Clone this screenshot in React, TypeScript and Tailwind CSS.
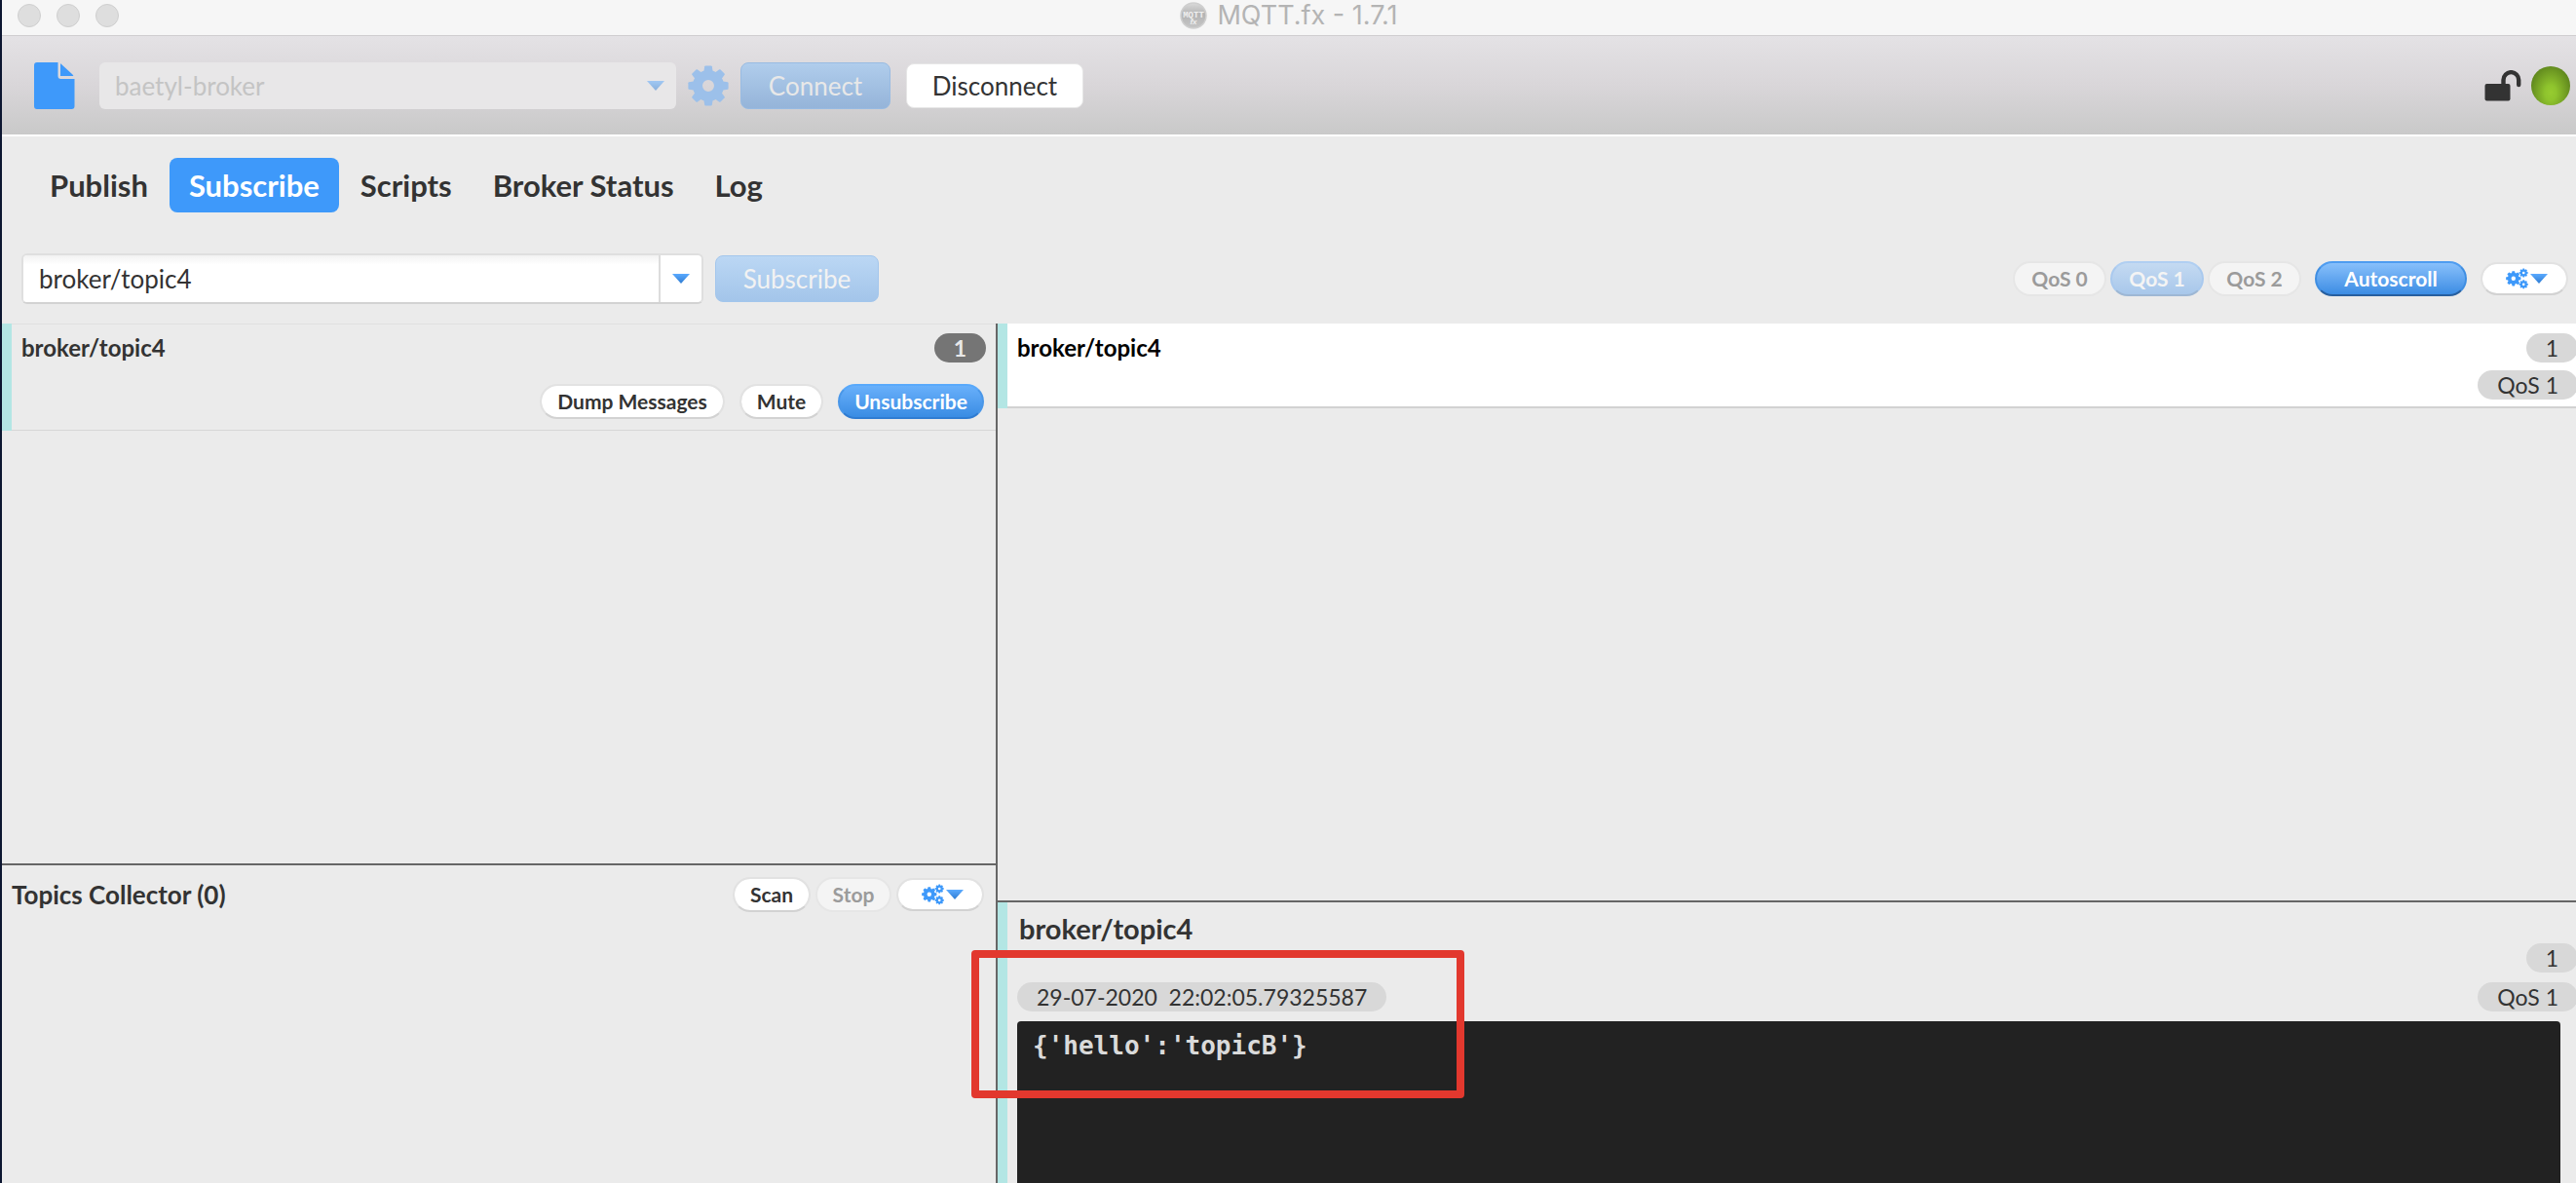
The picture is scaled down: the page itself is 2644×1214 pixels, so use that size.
import type { ButtonHTMLAttributes, ReactNode } from "react";

const TURNS = [0, 45, 90, 135, 180, 225, 270, 315];

function GearShape() {
  return (
    <g fill="currentColor">
      <circle cx="21" cy="21" r="11" fill="none" stroke="currentColor" strokeWidth="10" />
      {TURNS.map((a) => (
        <path key={a} transform={`rotate(${a} 21 21)`} d="M16 9 L17.2 1.2 Q17.4 0.4 18.2 0.4 H23.8 Q24.6 0.4 24.8 1.2 L26 9 Z" />
      ))}
    </g>
  );
}

function Gear() {
  return (
    <svg viewBox="0 0 42 42" className="size-[42px]" aria-hidden="true">
      <GearShape />
    </svg>
  );
}

function Gears() {
  return (
    <svg viewBox="0 0 23 22" className="h-[22px] w-[23px] text-[#3e99fa]" aria-hidden="true">
      <g transform="translate(0 3) scale(0.37)">
        <GearShape />
      </g>
      <g transform="translate(13.6 0.4) scale(0.22)">
        <GearShape />
      </g>
      <g transform="translate(13.6 12.2) scale(0.22)">
        <GearShape />
      </g>
    </svg>
  );
}

function Arrow() {
  return (
    <svg viewBox="0 0 18 10" className="h-2.5 w-[18px]" aria-hidden="true">
      <defs>
        <linearGradient id="arrow" x1="0" y1="0" x2="0" y2="1">
          <stop offset="0" stopColor="#5aaaff" />
          <stop offset="1" stopColor="#2f7cd2" />
        </linearGradient>
      </defs>
      <path d="M0 0H18L9 10Z" fill="url(#arrow)" />
    </svg>
  );
}

function FileIcon() {
  return (
    <svg viewBox="0 0 42 48" className="h-12 w-[42px]" fill="#3e99fa">
      <path d="M3 0H24.5V14Q24.5 17 27.5 17H41.5V45Q41.5 48 38.5 48H3Q0 48 0 45V3Q0 0 3 0Z" />
      <path d="M27 1.2Q28 1.6 28.6 2.4L39 12Q40 13 40.4 14H27Z" />
    </svg>
  );
}

function UnlockIcon() {
  return (
    <svg viewBox="0 0 38 32" className="h-8 w-[38px]" role="img" aria-label="Unencrypted">
      <rect x="0.5" y="14" width="26" height="17.5" rx="2" fill="#333" />
      <path d="M19.5 15V10A7.8 7.8 0 0 1 35.2 10V15" fill="none" stroke="#333" strokeWidth="4.4" strokeLinecap="round" />
    </svg>
  );
}

function AppLogo() {
  return (
    <svg viewBox="0 0 28 28" className="size-7" aria-hidden="true">
      <defs>
        <linearGradient id="logo" x1="0" y1="0" x2="0" y2="1">
          <stop offset="0" stopColor="#dadada" />
          <stop offset="0.45" stopColor="#b4b4b4" />
          <stop offset="1" stopColor="#c6c6c6" />
        </linearGradient>
      </defs>
      <circle cx="14" cy="14" r="13" fill="url(#logo)" stroke="#cfcfcf" strokeWidth="1.5" />
      <text x="14" y="15.5" textAnchor="middle" fontSize="9" fontWeight="700" fill="#efefef" fontFamily="Liberation Mono, monospace">MQTT</text>
      <text x="14" y="23" textAnchor="middle" fontSize="8" fontWeight="700" fontStyle="italic" fill="#efefef" fontFamily="Liberation Sans, sans-serif">fx</text>
    </svg>
  );
}

const PILL = "flex h-9 items-center justify-center rounded-full border-2 text-[21px] leading-6 font-bold whitespace-nowrap";
const WHITE = "border-[#e2e2e2] border-b-[#d2d2d2] bg-white bg-clip-padding text-[#333]";
const FADED = "border-[#e6e6e6] bg-[#f4f4f4] text-[#9b9b9b]";
const BLUE = "border-t-[#59a9fb] border-x-[#4a97e8] border-b-[#2f7cd2] bg-linear-to-b from-[#6bb2fc] to-[#368ae2] bg-origin-border text-white";

function Pill({ className, ...rest }: ButtonHTMLAttributes<HTMLButtonElement>) {
  return <button type="button" className={`${PILL} ${className}`} {...rest} />;
}

function Badge({ children, className }: { children: ReactNode; className: string }) {
  return (
    <span className={`flex h-[30px] items-center rounded-full px-5 text-[23px] leading-7 whitespace-pre ${className}`}>
      {children}
    </span>
  );
}

function MenuPill() {
  return (
    <button type="button" aria-label="Options" className={`flex h-[34px] w-[90px] items-center justify-center gap-0.5 rounded-full border-2 pl-1 ${WHITE}`}>
      <Gears />
      <Arrow />
    </button>
  );
}

const TABS = ["Publish", "Subscribe", "Scripts", "Broker Status", "Log"];

export default function App() {
  return (
    <div className="relative flex h-screen flex-col overflow-hidden border-l-2 border-[#0c1630] bg-[#ebebeb] font-['Lato',sans-serif] text-[#333]">
      <header className="grid h-[37px] shrink-0 grid-cols-3 items-center border-b border-[#cfcdcf] bg-[#f6f6f6] px-4">
        <div className="flex items-center gap-4 pb-1">
          {["Close", "Minimize", "Zoom"].map((label) => (
            <button key={label} type="button" aria-label={label} className="size-6 rounded-full border border-[#cfcfcf] bg-[#dedede]" />
          ))}
        </div>
        <h1 className="flex items-center justify-center gap-2.5 pb-1 font-['Inter',sans-serif] text-[27px] leading-8 text-[#b4b4b4]">
          <AppLogo />
          MQTT.fx - 1.7.1
        </h1>
      </header>

      <div className="flex h-[103px] shrink-0 items-center border-b-2 border-white bg-linear-to-b from-[#e4e2e5] via-[#d9d6d9] to-[#c9c9c9] pr-1.5 pl-[33px]">
        <button type="button" aria-label="New profile">
          <FileIcon />
        </button>
        <div className="relative ml-[25px] w-[592px]">
          <select disabled aria-label="Connection profile" className="h-12 w-full appearance-none rounded-md bg-[#e8e7e8] px-4 text-[26px] leading-8 text-[#c4c4c4] opacity-100">
            <option>baetyl-broker</option>
          </select>
          <span className="pointer-events-none absolute inset-y-0 right-3 flex items-center opacity-50">
            <Arrow />
          </span>
        </div>
        <button type="button" aria-label="Edit profiles" className="ml-3 text-[#9cc0ea]">
          <Gear />
        </button>
        <button type="button" disabled className="ml-3 h-12 w-[154px] rounded-lg border border-[#98bbe2] bg-linear-to-b from-[#b0cdec] to-[#95b4d9] text-[26px] leading-8 text-[#e8e8e8]">
          Connect
        </button>
        <button type="button" className="ml-4 h-[46px] w-[182px] rounded-lg border border-[#e6e6e6] bg-white text-[26px] leading-8">
          Disconnect
        </button>
        <div className="ml-auto flex items-center gap-2.5">
          <UnlockIcon />
          <span role="img" aria-label="Connected" className="size-10 rounded-full bg-[radial-gradient(ellipse_at_50%_68%,#96cb30_0%,#8fc42d_20%,#76a325_50%,#5b821c_80%)]" />
        </div>
      </div>

      <nav className="flex shrink-0 items-center gap-0.5 pt-[22px] pl-[29px]">
        {TABS.map((tab) => (
          <button
            key={tab}
            type="button"
            className={`h-14 rounded-lg px-5 text-[31px] leading-10 font-bold ${tab === "Subscribe" ? "bg-[#3e99fa] text-white" : ""}`}
          >
            {tab}
          </button>
        ))}
      </nav>

      <div className="flex h-[114px] shrink-0 items-center pt-10 pr-2 pb-[18px] pl-5">
        <div className="flex h-[52px] w-[700px] overflow-hidden rounded-md border-2 border-[#dfdfdf] border-b-[#d2d2d2] bg-white">
          <input
            aria-label="Topic"
            defaultValue="broker/topic4"
            className="min-w-0 flex-1 bg-linear-to-b from-[#f2f2f2] to-white to-20% px-4 text-[26px] leading-8 outline-none"
          />
          <button type="button" aria-label="Recent topics" className="flex w-11 items-center justify-center border-l-2 border-[#dcdcdc]">
            <Arrow />
          </button>
        </div>
        <button type="button" disabled className="ml-3 h-12 w-[168px] rounded-lg border border-[#a3c6ec] bg-linear-to-b from-[#bbd7f4] to-[#a3c5ea] text-[26px] leading-8 text-[#f2f2f2]">
          Subscribe
        </button>
        <div className="ml-auto flex items-center">
          <Pill disabled className={`w-[96px] ${FADED}`}>QoS 0</Pill>
          <Pill disabled className="ml-1 w-[96px] border-x-[#a9c9ee] border-t-[#b0cff2] border-b-[#9db7d4] bg-linear-to-b from-[#c6dbf2] to-[#a6c6ea] bg-origin-border text-[#f4f4f4]">QoS 1</Pill>
          <Pill disabled className={`ml-1 w-[96px] ${FADED}`}>QoS 2</Pill>
          <Pill className="mx-3.5 w-[156px] border-x-[#3f8ee2] border-t-[#4e9cf0] border-b-[#275f9f] bg-linear-to-b from-[#8cc3fc] to-[#3589e2] bg-origin-border text-white">Autoscroll</Pill>
          <MenuPill />
        </div>
      </div>

      <main className="grid min-h-0 flex-1 grid-cols-[1020fr_1622fr]">
        <div className="flex min-h-0 flex-col">
          <section className="flex-[554]">
            <article className="flex h-[110px] border-y border-[#d6d6d6] border-t-[#e0e0e0]">
              <span className="-my-px w-2.5 bg-[#b3e6e4]" />
              <div className="flex flex-1 flex-col justify-between pt-[9px] pr-2.5 pb-[11px] pl-2.5">
                <div className="flex items-center justify-between">
                  <h2 className="text-[24px] leading-7 font-bold">broker/topic4</h2>
                  <Badge className="bg-[#757575] font-bold text-[#e8e8e8]">1</Badge>
                </div>
                <div className="flex justify-end gap-[15px] pr-0.5">
                  <Pill className={`w-[190px] ${WHITE}`}>Dump Messages</Pill>
                  <Pill className={`w-[86px] ${WHITE}`}>Mute</Pill>
                  <Pill className={`w-[150px] ${BLUE}`}>Unsubscribe</Pill>
                </div>
              </div>
            </article>
          </section>
          <section className="flex-[326] border-t-2 border-[#666]">
            <div className="flex items-center pt-3 pr-3 pl-2.5">
              <h2 className="flex-1 text-[26px] leading-9 font-bold">Topics Collector (0)</h2>
              <Pill className={`w-20 ${WHITE}`}>Scan</Pill>
              <Pill disabled className={`mx-[5px] w-[78px] ${FADED}`}>Stop</Pill>
              <MenuPill />
            </div>
          </section>
        </div>

        <div className="flex min-h-0 min-w-0 flex-col border-l-2 border-[#666]">
          <section className="flex-[592] overflow-hidden">
            <article className="flex h-[87px]">
              <span className="w-2.5 bg-[#b3e6e4]" />
              <div className="flex flex-1 justify-between border-b-2 border-[#d2d2d2] bg-white pt-2.5 pl-2.5">
                <h2 className="text-[24px] leading-[30px] font-bold text-black">broker/topic4</h2>
                <div className="-mr-0.5 flex flex-col items-end gap-2">
                  <Badge className="bg-[#d8d8d8]">1</Badge>
                  <Badge className="bg-[#d8d8d8]">QoS 1</Badge>
                </div>
              </div>
            </article>
          </section>
          <section className="flex min-h-0 flex-[288] border-t-2 border-[#666]">
            <span className="w-2.5 bg-[#b3e6e4]" />
            <div className="flex min-w-0 flex-1 flex-col overflow-hidden pl-2.5">
              <div className="flex justify-between">
                <div className="flex flex-col justify-between">
                  <h2 className="mt-[7px] ml-0.5 text-[29px] leading-10 font-bold">broker/topic4</h2>
                  <Badge className="bg-[#d8d8d8]">{"29-07-2020  22:02:05.79325587"}</Badge>
                </div>
                <div className="-mr-0.5 flex flex-col items-end gap-2.5 pt-[42px]">
                  <Badge className="bg-[#d8d8d8]">1</Badge>
                  <Badge className="bg-[#d8d8d8]">QoS 1</Badge>
                </div>
              </div>
              <textarea
                readOnly
                aria-label="Payload"
                defaultValue="{'hello':'topicB'}"
                className="mt-2.5 mr-4 flex-1 resize-none rounded-t-sm bg-[#222] px-4 py-[9px] font-['DejaVu_Sans_Mono',monospace] text-[26px] leading-8 font-bold text-[#dadada] outline-none"
              />
            </div>
          </section>
        </div>
      </main>

      <div className="pointer-events-none absolute top-[975px] left-[995px] h-[152px] w-[506px] rounded-sm border-8 border-[#e2382e]" />
    </div>
  );
}
